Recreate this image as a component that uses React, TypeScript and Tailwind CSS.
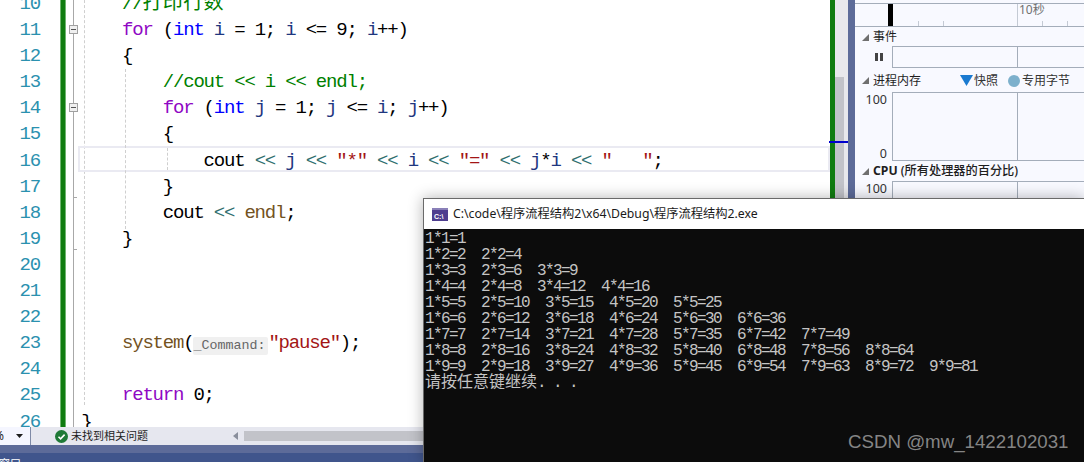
import React from "react";

const mono = "font-['Liberation_Mono','Noto_Sans_CJK_SC',monospace]";
const ui = "font-['Noto_Sans','Noto_Sans_CJK_SC',sans-serif]";

const K = ({ children }: { children: React.ReactNode }) => <span className="text-[#8f08c4]">{children}</span>;
const T = ({ children }: { children: React.ReactNode }) => <span className="text-[#0000ff]">{children}</span>;
const V = ({ children }: { children: React.ReactNode }) => <span className="text-[#1f377f]">{children}</span>;
const O = ({ children }: { children: React.ReactNode }) => <span className="text-[#2f6f6f]">{children}</span>;
const F = ({ children }: { children: React.ReactNode }) => <span className="text-[#74531f]">{children}</span>;
const S = ({ children }: { children: React.ReactNode }) => <span className="text-[#a31515]">{children}</span>;
const C = ({ children }: { children: React.ReactNode }) => <span className="text-[#008000]">{children}</span>;

const code: React.ReactNode[] = [
  <>    <C>//<span className="text-[20px] tracking-[0.4px]">打印行数</span></C></>,
  <>    <K>for</K> (<T>int</T> <V>i</V> = 1; <V>i</V> &lt;= 9; <V>i</V>++)</>,
  <>    {"{"}</>,
  <>        <C>//cout &lt;&lt; i &lt;&lt; endl;</C></>,
  <>        <K>for</K> (<T>int</T> <V>j</V> = 1; <V>j</V> &lt;= <V>i</V>; <V>j</V>++)</>,
  <>        {"{"}</>,
  <>            cout <O>&lt;&lt;</O> <V>j</V> <O>&lt;&lt;</O> <S>"*"</S> <O>&lt;&lt;</O> <V>i</V> <O>&lt;&lt;</O> <S>"="</S> <O>&lt;&lt;</O> <V>j</V>*<V>i</V> <O>&lt;&lt;</O> <S>"   "</S>;</>,
  <>        {"}"}</>,
  <>        cout <O>&lt;&lt;</O> <F>endl</F>;</>,
  <>    {"}"}</>,
  <></>,
  <></>,
  <></>,
  <>
    {"    "}<F>system</F>(
    <span className="inline-block h-[18px] w-[75px] rounded-[2px] bg-[#f0f0f0] align-[-1px] text-[13.33px] leading-[18px] tracking-normal text-[#666666]">_Command:</span>
    <S>"pause"</S>);
  </>,
  <></>,
  <>    <K>return</K> 0;</>,
  <>{"}"}</>,
];

const rows = Array.from({ length: 9 }, (_, r) =>
  Array.from({ length: r + 1 }, (_, c) => `${c + 1}*${r + 1}=${(c + 1) * (r + 1)}`).join("  ")
);

const FoldBox = () => (
  <div className="flex h-[9px] w-[9px] items-center justify-center border border-[#a0a0a0] bg-[#f0f0f0]">
    <div className="h-px w-[5px] bg-[#555555]" />
  </div>
);

const Tri = () => (
  <svg width="7" height="7" viewBox="0 0 7 7" className="shrink-0">
    <path d="M7 0V7H0Z" fill="#6f6f6f" />
  </svg>
);

const Header = ({ h, children }: { h: string; children: React.ReactNode }) => (
  <div className={`flex items-center pl-[7px] pt-px text-[12px] text-[#1e1e1e] ${h}`}>
    <Tri />
    <div className="ml-[4px] flex flex-1 items-center">{children}</div>
  </div>
);

const Graph = ({ h, left }: { h: string; left?: React.ReactNode }) => (
  <div className={`flex ${h}`}>
    <div className="flex w-[37px] shrink-0 flex-col justify-between pr-[5px] pt-px text-right text-[12.5px] leading-[14px] text-[#333333]">
      {left}
    </div>
    <div className="flex flex-1 border-y border-l border-[#a4adba]">
      <div className="w-[125px] border-r border-[#a4adba]" />
    </div>
  </div>
);

export default function App() {
  return (
    <div className={`relative flex h-[462px] w-[1084px] flex-col overflow-hidden bg-white ${ui}`}>
      <div className="flex min-h-0 flex-1">
        {/* Editor */}
        <div className={`relative flex min-w-0 flex-1 overflow-hidden text-[19px] leading-[26.1px] tracking-[-1.2px] text-black ${mono}`}>
          <div className="-mt-[9px] w-[40px] shrink-0 text-right text-[#2b91af]">
            {code.map((_, i) => (
              <div key={i} className="h-[26.1px]">{i + 10}</div>
            ))}
          </div>
          <div className="w-[20px] shrink-0" />
          <div className="w-[6px] shrink-0 border-x border-[#6fb56f] bg-[#107c10]" />
          <div className="relative -mt-[10px] w-[15.2px] shrink-0">
            <div className="absolute left-[7px] top-0 h-[460px] w-px bg-[#a8a8a8]" />
            <div className="absolute left-[18px] top-0 h-[415px] border-l border-dashed border-[#cfcfcf]" />
            <div className="absolute left-[7px] top-[207px] h-px w-[4px] bg-[#a8a8a8]" />
            <div className="absolute left-[7px] top-[259px] h-px w-[4px] bg-[#a8a8a8]" />
            {code.map((_, i) => (
              <div key={i} className="relative flex h-[26.1px] items-center pl-[2.5px]">
                {(i === 1 || i === 4) && <FoldBox />}
              </div>
            ))}
          </div>
          <div className="-mt-[9px] flex-1 whitespace-pre">
            {code.map((line, i) => (
              <div key={i} className="h-[26.1px]">{line}</div>
            ))}
          </div>
          {/* overlays: current line, indent guides */}
          <div className="absolute left-[78px] top-[146px] h-[26px] w-[752px] border-2 border-[#eaeaf2]" />
          <div className="absolute left-[125px] top-[69px] h-[160px] border-l border-dashed border-[#cfcfcf]" />
          <div className="absolute left-[167px] top-[148px] h-[22px] border-l border-dashed border-[#cfcfcf]" />
        </div>

        {/* Scrollbar map */}
        <div className="relative flex w-[18px] shrink-0 bg-[#e8e8ec]">
          <div className="w-[5px] bg-[#107c10]" />
          <div className="mt-[77px] w-[9px] bg-[#c2c3c9]" />
          <div className="absolute -left-[1px] top-[141px] h-[2px] w-[19px] bg-[#0000cd]" />
        </div>

        {/* Splitter */}
        <div className="w-[7px] shrink-0 bg-[#5d6b99]" />

        {/* Diagnostics */}
        <div className="flex w-[229px] shrink-0 flex-col bg-[#f8f9ff]">
          <div className="relative mt-[3px] h-[24px] shrink-0 border-y border-[#a4adba]">
            <div className="absolute bottom-0 left-[33px] top-0 w-[5px] bg-black" />
            <div className="absolute bottom-0 left-[63px] h-[5px] w-px bg-[#c4cad4]" />
            <div className="absolute bottom-0 left-[88px] h-[5px] w-px bg-[#c4cad4]" />
            <div className="absolute bottom-0 left-[162px] top-0 w-px bg-[#c4cad4]" />
            <div className="absolute bottom-0 left-[187px] h-[5px] w-px bg-[#c4cad4]" />
            <div className="absolute bottom-0 left-[212px] h-[5px] w-px bg-[#c4cad4]" />
            <div className="absolute left-[164px] top-0 text-[12px] leading-[12px] text-[#717171]">10秒</div>
          </div>
          <Header h="h-[19px]">事件</Header>
          <div className="flex h-[22px] shrink-0">
            <div className="flex w-[37px] shrink-0 items-center gap-[2px] pl-[20px]">
              <div className="h-[8px] w-[3px] bg-[#444444]" />
              <div className="h-[8px] w-[3px] bg-[#444444]" />
            </div>
            <div className="flex flex-1 border-y border-l border-[#a4adba]">
              <div className="w-[125px] border-r border-[#a4adba]" />
            </div>
          </div>
          <Header h="h-[24px]">
            <span className="w-[87px]">进程内存</span>
            <svg width="13" height="11" viewBox="0 0 13 11" className="mr-px">
              <path d="M0 0H13L6.5 11Z" fill="#1a7ad0" />
            </svg>
            <span className="w-[34px] text-[#333333]">快照</span>
            <div className="mr-[2px] h-[12px] w-[12px] rounded-full bg-[#7db0cc]" />
            <span className="text-[#333333]">专用字节</span>
          </Header>
          <Graph h="h-[69px]" left={<><span>100</span><span>0</span></>} />
          <Header h="h-[20px]"><span className="text-[12.2px] font-medium"><span className="font-bold">CPU</span> (所有处理器的百分比)</span></Header>
          <Graph h="flex-1" left={<span>100</span>} />
        </div>
      </div>

      {/* Status bar */}
      <div className="flex h-[18px] shrink-0 items-center bg-[#e6e7ef] text-[11.5px] text-[#1e1e1e]">
        <div className="flex h-full w-[31px] items-center justify-between border-r border-[#7f8aa6] bg-[#f5f6ff] pr-[7px] text-[12px]">
          <span className="-ml-[6px]">%</span>
          <svg width="7" height="4" viewBox="0 0 7 4"><path d="M0 0H7L3.5 4Z" fill="#1e1e1e" /></svg>
        </div>
        <svg width="13" height="13" viewBox="0 0 13 13" className="ml-[24px]">
          <circle cx="6.5" cy="6.5" r="6.5" fill="#1f7a37" />
          <path d="M3.5 6.7L5.6 8.8L9.6 4.6" fill="none" stroke="#fff" strokeWidth="1.6" />
        </svg>
        <span className="ml-[3px] w-[162px] text-[11px]">未找到相关问题</span>
        <svg width="5" height="8" viewBox="0 0 5 8"><path d="M5 0V8L0 4Z" fill="#8a8f9c" /></svg>
        <div className="ml-[6px] h-[10px] flex-1 bg-[#c2c3c9]" />
      </div>
      <div className="h-[8px] shrink-0 bg-[#5d6b99]" />
      <div className="h-[9px] shrink-0 overflow-hidden bg-[#40558c] text-[11px] leading-[12px] text-white">
        <div className="-ml-[1px] mt-[5px]">窗口</div>
      </div>

      {/* Console window */}
      <div className="absolute bottom-0 left-[423px] right-0 top-[198px] flex flex-col border-l border-t border-[#6a6a6a] bg-white shadow-[0_0_14px_rgba(0,0,0,0.3)]">
        <div className="flex h-[30px] shrink-0 items-center pl-[8px] text-[12.25px] text-[#1a1a1a]">
          <svg width="16" height="13" viewBox="0 0 16 13" className="shrink-0">
            <rect width="16" height="13" fill="#4e3d8f" />
            <rect width="16" height="2" fill="#8a80b8" />
            <text x="2" y="10.5" fontSize="7" fontWeight="700" fill="#ffffff" fontFamily="Liberation Sans, sans-serif">C:\</text>
          </svg>
          <span className="ml-[5px] whitespace-pre">C:\code\程序流程结构2\x64\Debug\程序流程结构2.exe</span>
        </div>
        <div className={`flex-1 whitespace-pre bg-[#0c0c0c] pl-px pt-[2px] text-[16px] leading-[16px] tracking-[-1.6px] text-[#c4c4c4] ${mono}`}>
          {rows.map((r) => (
            <div key={r} className="h-[16px]">{r}</div>
          ))}
          <div className="h-[16px]">
            <span className="tracking-normal">请按任意键继续</span>. . .
          </div>
        </div>
      </div>

      {/* Watermark */}
      <div className="absolute left-[848px] top-[431px] font-['Liberation_Sans',sans-serif] text-[18.7px] leading-[22px] text-[#858585]">
        CSDN @mw_1422102031
      </div>
    </div>
  );
}
